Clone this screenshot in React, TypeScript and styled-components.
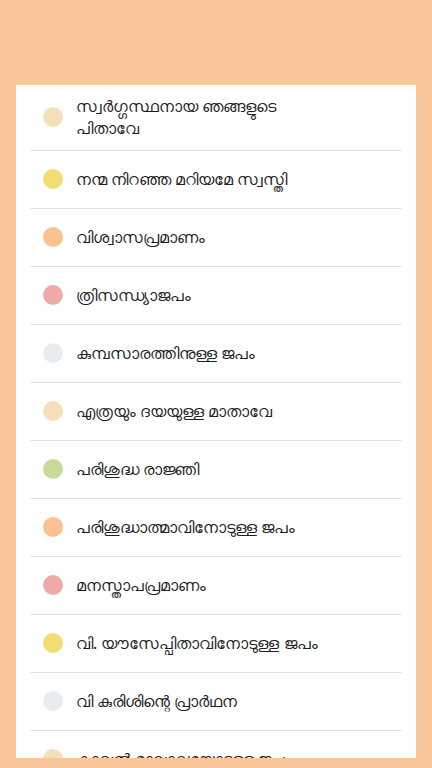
import styled, { createGlobalStyle } from 'styled-components'

const GlobalStyle = createGlobalStyle`
  html, body {
    margin: 0;
    padding: 0;
    background: #f9c69b;
  }
  body {
    font-family: 'Noto Sans', Roboto, 'Liberation Sans', sans-serif;
  }
`

type Prayer = { title: string; color: string }

const prayers: Prayer[] = [
  { title: 'സ്വർഗ്ഗസ്ഥനായ ഞങ്ങളുടെ പിതാവേ', color: '#f5dfb8' },
  { title: 'നന്മ നിറഞ്ഞ മറിയമേ സ്വസ്തി', color: '#f2de72' },
  { title: 'വിശ്വാസപ്രമാണം', color: '#f9c290' },
  { title: 'ത്രിസന്ധ്യാജപം', color: '#efaaa8' },
  { title: 'കുമ്പസാരത്തിനുള്ള ജപം', color: '#e9ecef' },
  { title: 'എത്രയും ദയയുള്ള മാതാവേ', color: '#f5dfb8' },
  { title: 'പരിശുദ്ധ രാജ്ഞി', color: '#c8da9c' },
  { title: 'പരിശുദ്ധാത്മാവിനോടുള്ള ജപം', color: '#f9c290' },
  { title: 'മനസ്താപപ്രമാണം', color: '#efaaa8' },
  { title: 'വി. യൗസേപ്പിതാവിനോടുള്ള ജപം', color: '#f2de72' },
  { title: 'വി കുരിശിന്റെ പ്രാർഥന', color: '#e9ecef' },
  { title: 'കാവൽ മാലാഖയോടുള്ള ജപം', color: '#f5dfb8' },
  { title: 'ഭക്ഷണത്തിനു മുമ്പുള്ള പ്രാർഥന', color: '#c8da9c' },
]

const App = () => {
  return (
    <Page>
      <GlobalStyle />
      <Card>
        <List>
          {prayers.map((p) => (
            <Row key={p.title}>
              <Dot $color={p.color} />
              <Title>{p.title}</Title>
            </Row>
          ))}
        </List>
      </Card>
    </Page>
  )
}

export default App

const Page = styled.div`
  box-sizing: border-box;
  height: 768px;
  padding: 85px 16px 10px;
  display: flex;
  flex-direction: column;
`

const Card = styled.div`
  flex: 1;
  background: #ffffff;
  overflow: hidden;
`

const List = styled.ul`
  list-style: none;
  margin: 0;
  padding: 0 14px;
`

const Row = styled.li`
  display: flex;
  align-items: center;
  gap: 13px;
  box-sizing: border-box;
  min-height: 58px;
  padding: 10px 0 11px 13px;
  border-bottom: 1px solid #e2e2e2;
`

const Dot = styled.span<{ $color: string }>`
  flex: none;
  width: 20px;
  height: 20px;
  border-radius: 50%;
  background: ${(p) => p.$color};
`

const Title = styled.span`
  flex: 1;
  padding-right: 60px;
  font-size: 16px;
  line-height: 22px;
  color: #1f1f1f;
`
